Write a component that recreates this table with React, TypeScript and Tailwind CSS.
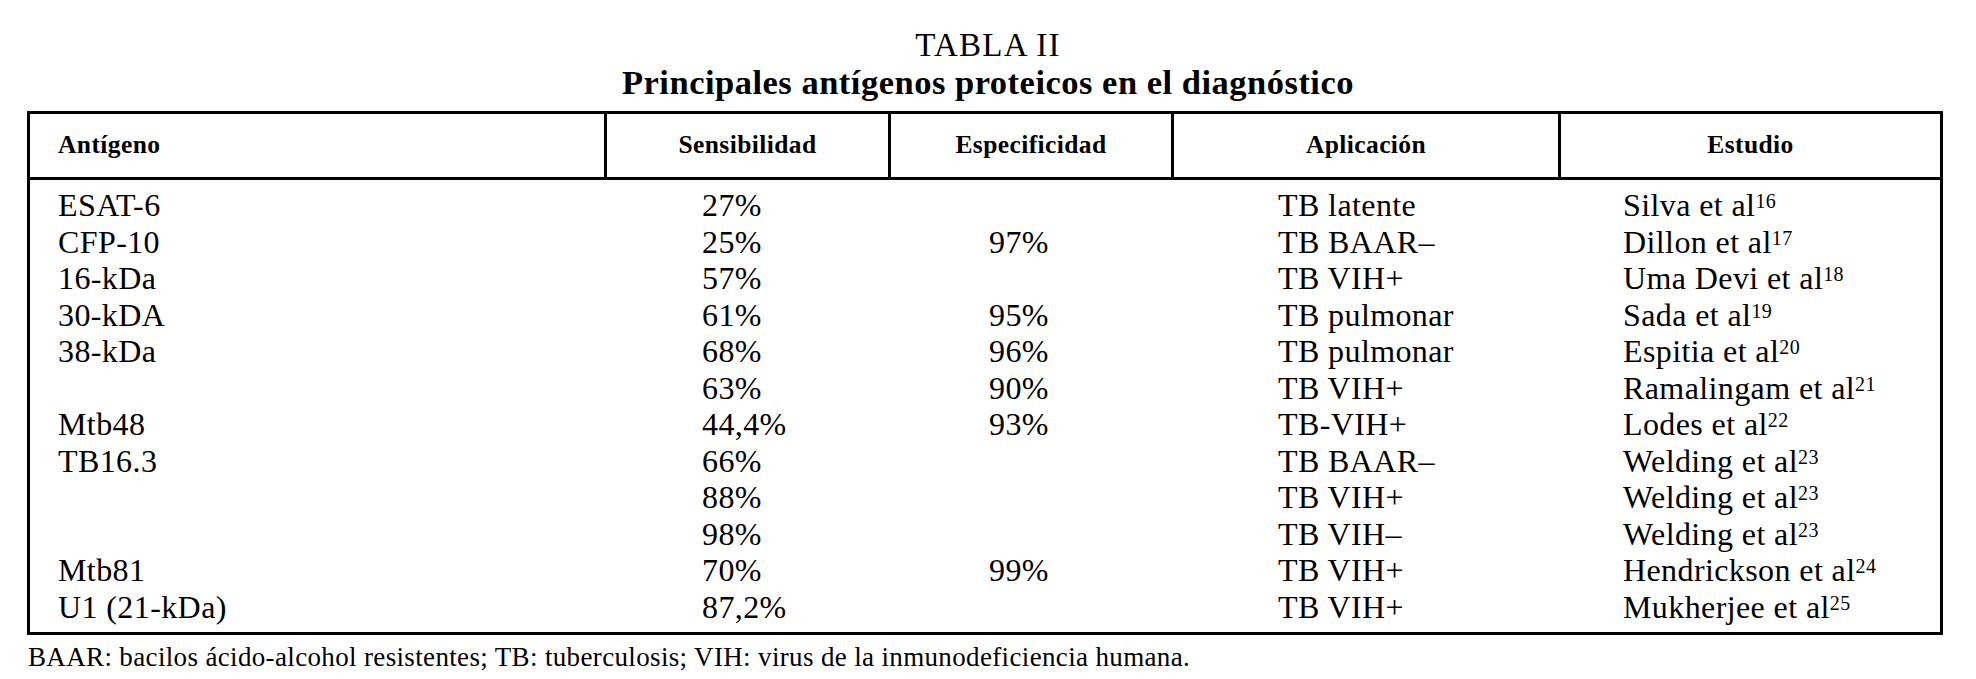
const ROWS: [string, string, string, string, string, string][] = [
  ["ESAT-6", "27%", "", "TB latente", "Silva et al", "16"],
  ["CFP-10", "25%", "97%", "TB BAAR–", "Dillon et al", "17"],
  ["16-kDa", "57%", "", "TB VIH+", "Uma Devi et al", "18"],
  ["30-kDA", "61%", "95%", "TB pulmonar", "Sada et al", "19"],
  ["38-kDa", "68%", "96%", "TB pulmonar", "Espitia et al", "20"],
  ["", "63%", "90%", "TB VIH+", "Ramalingam et al", "21"],
  ["Mtb48", "44,4%", "93%", "TB-VIH+", "Lodes et al", "22"],
  ["TB16.3", "66%", "", "TB BAAR–", "Welding et al", "23"],
  ["", "88%", "", "TB VIH+", "Welding et al", "23"],
  ["", "98%", "", "TB VIH–", "Welding et al", "23"],
  ["Mtb81", "70%", "99%", "TB VIH+", "Hendrickson et al", "24"],
  ["U1 (21-kDa)", "87,2%", "", "TB VIH+", "Mukherjee et al", "25"],
];

const COLS = "grid grid-cols-[577px_284px_283px_387px_379px]";

export default function App() {
  return (
    <div className="w-[1976px] h-[679px] bg-white text-black font-['Liberation_Serif','Times_New_Roman',serif] overflow-hidden">
      {/* Caption */}
      <div className="pt-[27px] flex flex-col items-center">
        <div className="text-[33px] leading-[36px] tracking-[1.2px]">TABLA II</div>
        <div className="text-[34.5px] leading-[38px] font-bold tracking-[0.5px]">
          Principales antígenos proteicos en el diagnóstico
        </div>
      </div>

      {/* Table */}
      <div className="ml-[27px] mt-[10px] w-[1916px] border-[3px] border-black">
        <div className={`${COLS} h-[66px] border-b-[3px] border-black text-[25.5px] font-bold tracking-[0.4px]`}>
          <div className="flex items-center pl-[28px] border-r-[3px] border-black">Antígeno</div>
          <div className="flex items-center justify-center border-r-[3px] border-black">Sensibilidad</div>
          <div className="flex items-center justify-center border-r-[3px] border-black">Especificidad</div>
          <div className="flex items-center justify-center border-r-[3px] border-black">Aplicación</div>
          <div className="flex items-center justify-center">Estudio</div>
        </div>

        <div className="pt-[7px] pb-[7px] text-[32px] tracking-[0.4px]">
          {ROWS.map((r, i) => (
            <div key={i} className={`${COLS} h-[36.5px] leading-[36.5px] whitespace-nowrap`}>
              <div className="pl-[28px]">{r[0]}</div>
              <div className="pl-[95px]">{r[1]}</div>
              <div className="pl-[98px]">{r[2]}</div>
              <div className="pl-[104px]">{r[3]}</div>
              <div className="pl-[62px]">
                {r[4]}
                <span className="text-[20px] align-top relative top-[-4px]">{r[5]}</span>
              </div>
            </div>
          ))}
        </div>
      </div>

      {/* Footnote */}
      <div className="pl-[28px] mt-[7px] text-[27px] leading-[30px] tracking-[0.35px] whitespace-nowrap">
        BAAR: bacilos ácido-alcohol resistentes; TB: tuberculosis; VIH: virus de la inmunodeficiencia humana.
      </div>
    </div>
  );
}
